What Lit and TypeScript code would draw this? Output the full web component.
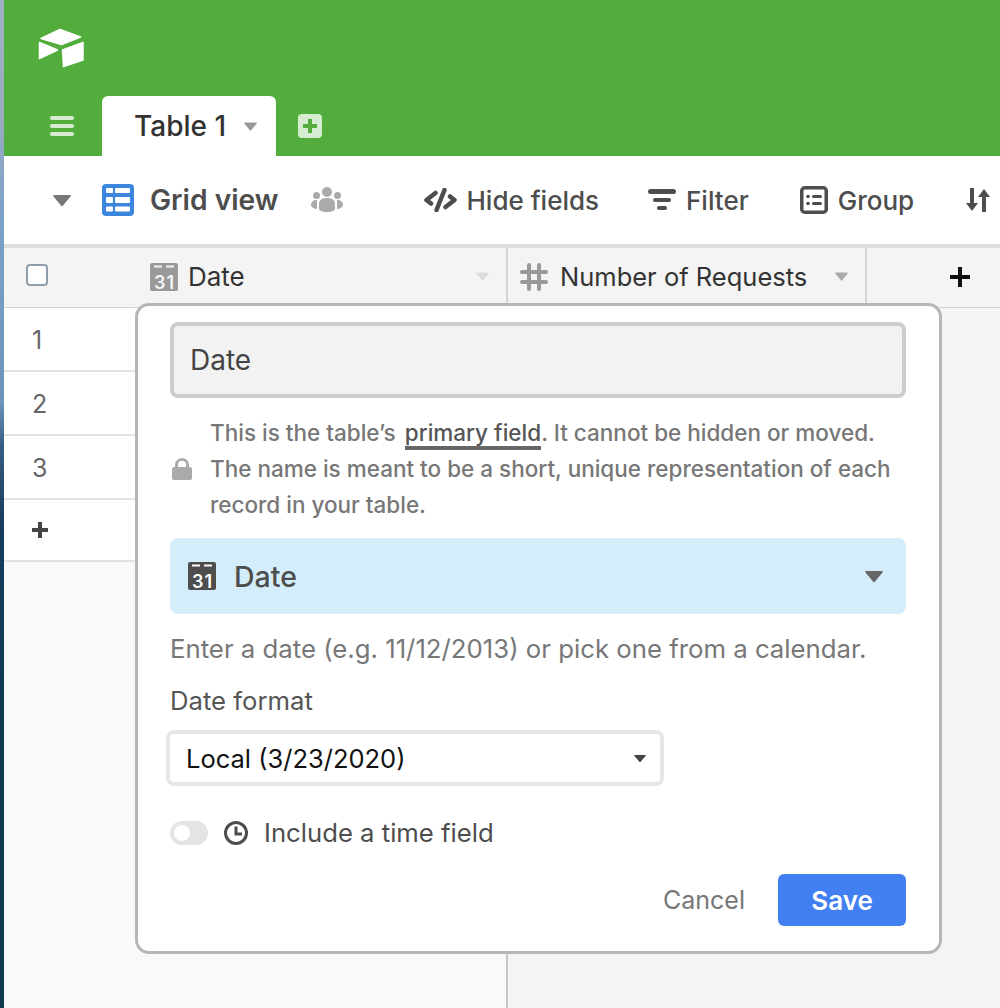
import { LitElement, css, html } from "lit";
import { customElement } from "lit/decorators.js";

const calendar = (bg: string, fg: string) => html`<svg class="ico28" viewBox="0 0 28 28">
  <path fill=${bg} d="M2 0h24a2 2 0 0 1 2 2v24a2 2 0 0 1-2 2H2a2 2 0 0 1-2-2V2a2 2 0 0 1 2-2z"/>
  <rect x="4" y="2.500" width="8" height="2" fill=${fg}/>
  <rect x="16" y="2.500" width="8" height="2" fill=${fg}/>
  <text x="14.500" y="25.500" text-anchor="middle" class="cal" fill=${fg}>31</text>
</svg>`;

const caret = (w: number, h: number, color: string) => html`<svg width=${w} height=${h} viewBox="0 0 12 8" style="display:block"><path fill=${color} d="M0.6 0.4h10.800a.5.5 0 0 1 .4.8L6.400 7.600a.5.5 0 0 1-.8 0L.2 1.200a.5.5 0 0 1 .4-.8z"/></svg>`;

@customElement("app-root")
export class AppRoot extends LitElement {
  static styles = css`
    :host {
      display: block;
      width: 1000px;
      height: 1008px;
      overflow: hidden;
      position: relative;
      font-family: Inter, "Liberation Sans", sans-serif;
      color: #333;
    }
    .page { display: flex; height: 1008px; }
    .wallpaper {
      width: 4px;
      flex: none;
      background: linear-gradient(180deg, #9fb0c6 0%, #9aabc0 12%, #7fa3c8 20%, #6b94bb 40%, #3a5f85 44%, #173c5c 52%, #0f3a52 70%, #0e3a50 100%);
    }
    .app { flex: 1; min-width: 0; display: flex; flex-direction: column; background: #f9f9f9; }

    .top { height: 156px; flex: none; background: #52ad3d; display: flex; flex-direction: column; justify-content: space-between; }
    .logo { display: block; margin: 28px 0 0 34px; width: 46px; height: 40px; }
    .tabs { display: flex; align-items: flex-end; height: 60px; }
    .menu { width: 98px; height: 60px; display: flex; align-items: center; padding-left: 46px; box-sizing: border-box; }
    .tab {
      width: 174px; height: 60px; background: #fff; border-radius: 6px 6px 0 0;
      display: flex; align-items: center; box-sizing: border-box; padding: 0 0 0 32px;
      font-size: 28px; font-weight: 500; color: #333; gap: 18px;
    }
    .add { margin-left: 22px; height: 60px; display: flex; align-items: center; }

    .toolbar { height: 88px; flex: none; background: #fff; display: flex; align-items: center; font-weight: 500; color: #4d4d4d; font-size: 26px; white-space: nowrap; }
    .view-caret { margin-left: 49px; }
    .grid-ico { margin-left: 31px; }
    .view-name { margin-left: 16px; font-size: 28.200px; font-weight: 600; }
    .people { margin-left: 33px; }
    .tool { display: flex; align-items: center; gap: 10px; }
    .hide { margin-left: 81px; gap: 9px; }
    .filter { margin-left: 49px; }
    .group { margin-left: 51px; }
    .sort { margin-left: 52px; }

    .head { height: 64px; flex: none; box-sizing: border-box; background: #f4f4f4; border-top: 4px solid #ddd; border-bottom: 1px solid #d5d5d5; padding-bottom: 2px; display: flex; font-size: 26px; color: #333; }
    .head > div { display: flex; align-items: center; box-sizing: border-box; }
    .h1 { width: 502px; }
    .check { width: 22px; height: 22px; box-sizing: border-box; border: 2px solid #8f9dab; border-radius: 4px; background: #fff; margin: -4px 102px 0 22px; }
    .h1 .name { margin-left: 10px; flex: 1; }
    .h1 .arrow { margin-right: 17px; }
    .h2 { width: 361px; border-left: 2px solid #cfd6dc; border-right: 2px solid #cfd6dc; padding-left: 12px; font-size: 25.500px; }
    .h2 .name { margin-left: 12px; flex: 1; }
    .h2 .arrow { margin-right: 17px; }
    .h3 { flex: 1; background: #f4f4f4; justify-content: center; padding-left: 52px; }

    .body { flex: 1; display: flex; min-height: 0; }
    .rows { width: 502px; flex: none; border-right: 2px solid #c8c8c8; box-sizing: content-box; }
    .row { height: 60px; padding: 2px 0 0 28px; box-sizing: content-box; background: #fff; border-bottom: 2px solid #e2e2e2; font-size: 25px; color: #666; display: flex; align-items: center; }
    .row.plus { height: 60px; padding: 0 0 0 28px; }
    .rest { flex: 1; background: #f4f4f4; }

    .dialog {
      position: absolute; left: 135px; top: 303px; width: 807px; height: 651px; box-sizing: border-box;
      background: #fff; border: 3px solid #b6b6b6; border-radius: 14px;
      padding: 16px 33px 0 32px; display: flex; flex-direction: column;
    }
    .name-input {
      height: 76px; flex: none; box-sizing: border-box; background: #f2f2f2; border: 4px solid #ccc; border-radius: 8px;
      display: flex; align-items: center; padding-left: 16px; font-size: 28px; color: #444; font-weight: 400;
    }
    .note { display: flex; align-items: center; margin-top: 17px; color: #777; font-size: 22.500px; font-weight: 500; line-height: 36px; }
    .note svg { flex: none; margin-left: 2px; }
    .note p { margin: 0 0 0 18px; white-space: nowrap; }
    .primary { color: #555; border-bottom: 4px solid #666; margin-left: 3px; }
    .type {
      height: 76px; flex: none; margin-top: 15px; background: #d4edfb; border-radius: 8px;
      display: flex; align-items: center; padding: 0 23px 0 18px; font-size: 28.500px; font-weight: 500; color: #4d4d4d;
    }
    .type .name { margin-left: 18px; flex: 1; }
    .hint { margin-top: 18px; font-size: 25.750px; color: #777; line-height: 34px; white-space: nowrap; }
    .label { margin-top: 18px; font-size: 25.700px; color: #555; line-height: 34px; }
    .select {
      width: 498px; height: 56px; flex: none; box-sizing: border-box; margin: 12px 0 0 -4px; background: #fff; border: 4px solid #e6e6e6; border-radius: 8px;
      display: flex; align-items: center; justify-content: space-between; padding: 0 14px 0 16px; font-size: 25.500px; color: #111;
    }
    .time { display: flex; align-items: center; margin-top: 31px; font-size: 25.700px; color: #4d4d4d; }
    .toggle { width: 38px; height: 24px; border-radius: 12px; background: #e4e4e4; position: relative; flex: none; }
    .toggle::after { content: ""; position: absolute; left: 4px; top: 4px; width: 16px; height: 16px; border-radius: 50%; background: #fff; }
    .time svg { margin-left: 16px; }
    .time span { margin-left: 16px; }
    .actions { display: flex; justify-content: flex-end; align-items: center; margin-top: 26px; }
    .cancel { font-size: 25px; color: #777; margin-right: 33px; }
    .save { width: 128px; height: 52px; background: #4280f2; color: #fff; border-radius: 6px; display: flex; align-items: center; justify-content: center; font-size: 26px; font-weight: 600; }
    .ico28 { width: 28px; height: 28px; display: block; flex: none; }
    .cal { font: 600 18px Inter, "Liberation Sans", sans-serif; letter-spacing: 1px; }
  `;

  render() {
    return html`
      <div class="page">
        <div class="wallpaper"></div>
        <div class="app">
          <div class="top">
            <svg class="logo" viewBox="0 0 46 40">
              <g fill="#fff" stroke="#fff" stroke-width="1.500" stroke-linejoin="round">
                <path d="M22 1.500 3 10.500l20.500 6L42.500 9z"/>
                <path d="M45 14.500v17.500L25.500 38.500 24.500 22z"/>
                <path d="M1.500 14.500 19.500 22 1.500 30.500z"/>
              </g>
            </svg>
            <div class="tabs">
              <div class="menu">
                <svg width="24" height="20" viewBox="0 0 24 20"><g fill="#d6ecd0"><rect y="0" width="24" height="4" rx="2"/><rect y="8" width="24" height="4" rx="2"/><rect y="16" width="24" height="4" rx="2"/></g></svg>
              </div>
              <div class="tab"><span>Table 1</span>${caret(13, 9, "#999")}</div>
              <div class="add">
                <svg width="24" height="24" viewBox="0 0 24 24"><rect width="24" height="24" rx="4" fill="#d6ecd0"/><path fill="#52ad3d" d="M10 5h4v5h5v4h-5v5h-4v-5H5v-4h5z"/></svg>
              </div>
            </div>
          </div>

          <div class="toolbar">
            <span class="view-caret">${caret(18, 13, "#777")}</span>
            <svg class="grid-ico" width="32" height="32" viewBox="0 0 32 32">
              <rect width="32" height="32" rx="4" fill="#3c86dd"/>
              <g fill="#fff"><rect x="4" y="4" width="7" height="5" rx="1"/><rect x="13" y="4" width="15" height="5" rx="1"/><rect x="4" y="13" width="7" height="6" rx="1"/><rect x="13" y="13" width="15" height="6" rx="1"/><rect x="4" y="22.500" width="7" height="5" rx="1"/><rect x="13" y="22.500" width="15" height="5" rx="1"/></g>
            </svg>
            <span class="view-name">Grid view</span>
            <svg class="people" width="32" height="26" viewBox="0 0 32 26">
              <g fill="#aaa"><circle cx="16" cy="5" r="5"/><circle cx="5.500" cy="8.500" r="3.500"/><circle cx="26.500" cy="8.500" r="3.500"/>
              <path d="M8 17c0-4 3-6 8-6s8 2 8 6v5c0 1.500-3 3-8 3s-8-1.500-8-3z"/><path d="M6 13c-3.500 0-6 1.500-6 5 0 2 2 3.500 6 4z"/><path d="M26 13c3.500 0 6 1.500 6 5 0 2-2 3.500-6 4z"/></g>
            </svg>
            <div class="tool hide">
              <svg width="33" height="24" viewBox="0 0 33 24" fill="none" stroke="#4d4d4d" stroke-width="4.500" stroke-linecap="round" stroke-linejoin="round"><path d="M11.500 5 2.500 12l4.500 3.500"/><path d="M21.500 19l9-7-4.500-3.500"/><path d="M20.500 2 12.500 22"/></svg>
              <span>Hide fields</span>
            </div>
            <div class="tool filter">
              <svg width="28" height="24" viewBox="0 0 28 24"><g fill="#4d4d4d"><rect y="1" width="28" height="5" rx="2.500"/><rect x="5" y="10" width="18" height="4" rx="2"/><rect x="9" y="18" width="10" height="4" rx="2"/></g></svg>
              <span>Filter</span>
            </div>
            <div class="tool group">
              <svg width="28" height="28" viewBox="0 0 28 28"><rect x="1.750" y="1.750" width="24.500" height="24.500" rx="3" fill="none" stroke="#4d4d4d" stroke-width="3.500"/><g fill="#4d4d4d"><circle cx="8" cy="10.500" r="1.800"/><circle cx="8" cy="17.500" r="1.800"/><rect x="12" y="9" width="10" height="3" rx="1.500"/><rect x="12" y="16" width="10" height="3" rx="1.500"/></g></svg>
              <span>Group</span>
            </div>
            <svg class="sort" width="24" height="24" viewBox="0 0 24 24"><g fill="#4d4d4d"><path d="M4 0h4v15h4l-6 8-6-8h4z"/><path d="M16 24h4V9h4l-6-8-6 8h4z"/></g></svg>
          </div>

          <div class="head">
            <div class="h1">
              <div class="check"></div>
              ${calendar("#999", "#f4f4f4")}
              <span class="name">Date</span>
              <span class="arrow">${caret(13, 9, "#ddd")}</span>
            </div>
            <div class="h2">
              <svg class="ico28" viewBox="0 0 28 28" fill="none" stroke="#999" stroke-width="4" stroke-linecap="round"><path d="M9 2v24M19 2v24M2 9h24M2 19h24"/></svg>
              <span class="name">Number of Requests</span>
              <span class="arrow">${caret(13, 9, "#aaa")}</span>
            </div>
            <div class="h3">
              <svg width="20" height="20" viewBox="0 0 20 20"><path fill="#111" d="M8 0h4v8h8v4h-8v8H8v-8H0V8h8z"/></svg>
            </div>
          </div>

          <div class="body">
            <div class="rows">
              <div class="row">1</div>
              <div class="row">2</div>
              <div class="row">3</div>
              <div class="row plus">
                <svg width="16" height="16" viewBox="0 0 16 16"><path fill="#444" d="M6 0h4v6h6v4h-6v6H6v-6H0V6h6z"/></svg>
              </div>
            </div>
            <div class="rest"></div>
          </div>
        </div>
      </div>

      <div class="dialog">
        <div class="name-input">Date</div>
        <div class="note">
          <svg width="20" height="22" viewBox="0 0 20 22"><path fill="#aaa" d="M2 9h1V6.500a7 6.500 0 0 1 14 0V9h1a2 2 0 0 1 2 2v9a2 2 0 0 1-2 2H2a2 2 0 0 1-2-2v-9a2 2 0 0 1 2-2zm4 0h8V6.500a4 3.800 0 0 0-8 0z"/></svg>
          <p>This is the table’s <span class="primary">primary field</span>. It cannot be hidden or moved.<br>The name is meant to be a short, unique representation of each<br>record in your table.</p>
        </div>
        <div class="type">
          ${calendar("#4d4d4d", "#fff")}
          <span class="name">Date</span>
          ${caret(18, 13, "#666")}
        </div>
        <div class="hint">Enter a date (e.g. 11/12/2013) or pick one from a calendar.</div>
        <div class="label">Date format</div>
        <div class="select"><span>Local (3/23/2020)</span>${caret(12, 9, "#444")}</div>
        <div class="time">
          <div class="toggle"></div>
          <svg width="24" height="24" viewBox="0 0 24 24" fill="none" stroke="#4d4d4d" stroke-width="3"><circle cx="12" cy="12" r="10.500"/><path d="M12 5.500V13h6"/></svg>
          <span>Include a time field</span>
        </div>
        <div class="actions">
          <span class="cancel">Cancel</span>
          <div class="save">Save</div>
        </div>
      </div>
    `;
  }
}
